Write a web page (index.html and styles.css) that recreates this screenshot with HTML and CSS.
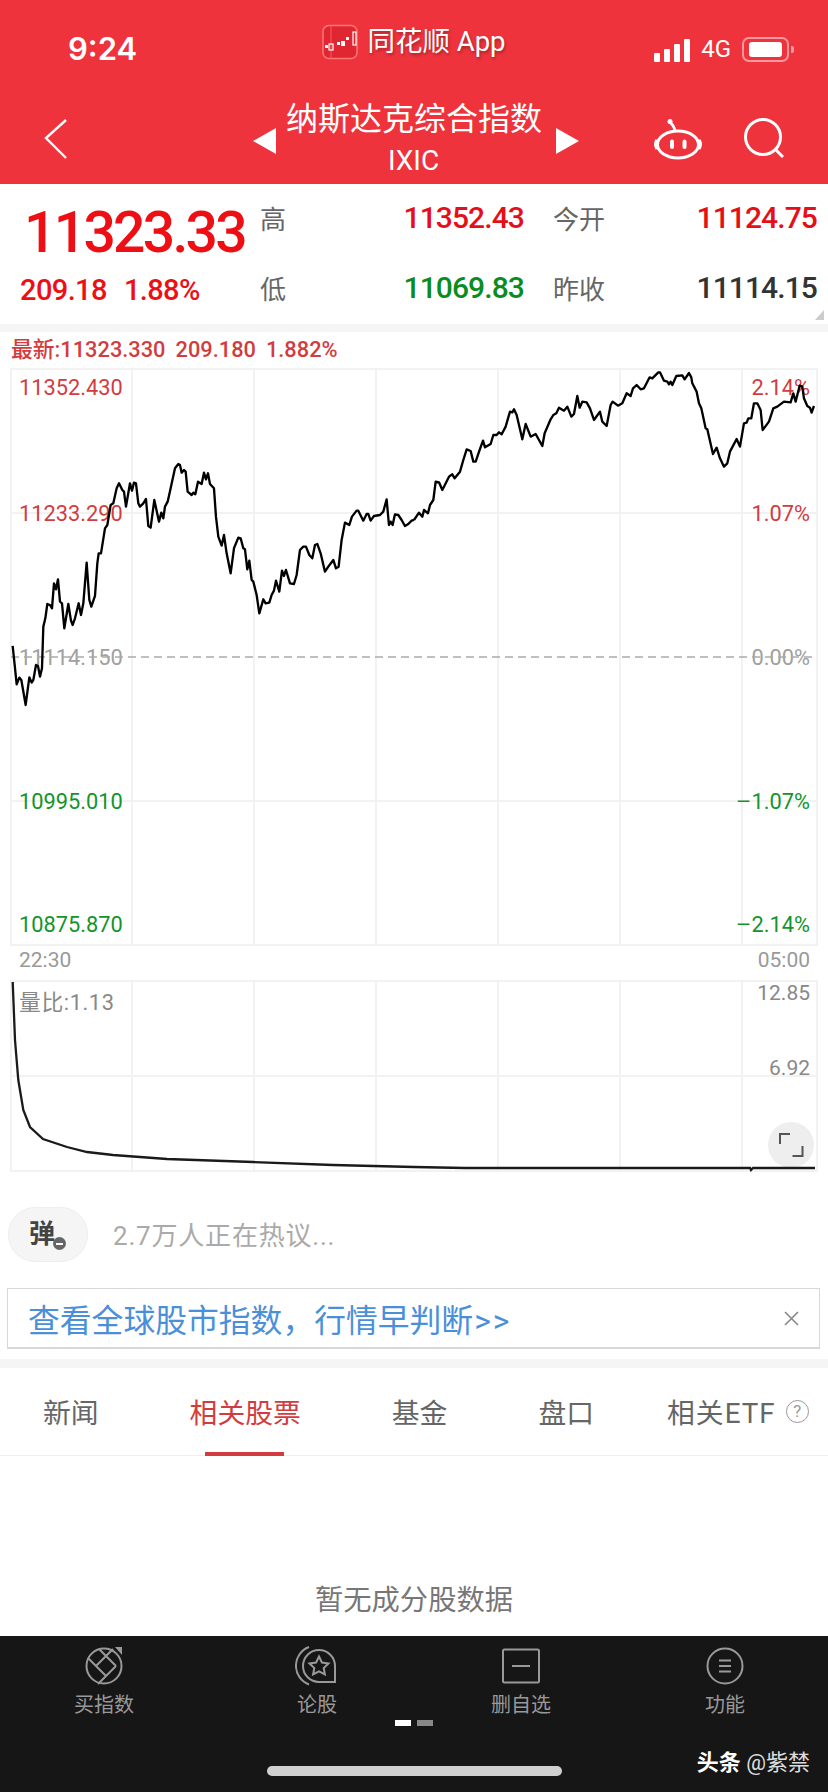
FILE: index.html
```html
<!DOCTYPE html>
<html lang="zh-CN">
<head>
  <meta charset="UTF-8" />
  <meta name="viewport" content="width=device-width, initial-scale=1.0"/>
  <title>纳斯达克综合指数</title>
  <link rel="stylesheet" href="styles.css">
</head>
<body>

<header class="top">
  <div class="status">
    <div class="clock">9:24</div>
    <div class="app-name">
      <svg class="app-logo" width="36" height="36" viewBox="0 0 36 36">
        <rect x="1" y="1.5" width="34" height="33" rx="6" fill="#e02630" stroke="#f77" stroke-width="1.5"/>
        <line x1="9" y1="2" x2="9" y2="34" stroke="#f56" stroke-width="1"/>
        <rect x="3" y="21" width="3" height="3" fill="#fff"/>
        <rect x="7" y="20" width="4" height="6" fill="none" stroke="#fff" stroke-width="1.2"/>
        <rect x="15" y="18" width="3" height="3" fill="#fff"/>
        <rect x="19" y="17" width="4" height="5" fill="#fff"/>
        <rect x="24" y="13" width="3" height="3" fill="#fff"/>
        <rect x="31" y="8" width="3" height="13" fill="none" stroke="#fff" stroke-width="1.2"/>
      </svg>
      <span>同花顺 App</span>
    </div>
    <div class="status-right">
      <div class="signal">
        <i class="s1"></i><i class="s2"></i><i class="s3"></i><i class="s4"></i>
      </div>
      <span class="net">4G</span>
      <div class="battery"><i></i></div>
      <div class="battery-nub"></div>
    </div>
  </div>

  <nav class="nav">
    <svg class="back" width="24" height="40" viewBox="0 0 24 40">
      <polyline points="22,1 2,19 22,39" fill="none" stroke="#fff" stroke-width="2.4"/>
    </svg>
    <div class="title-row">
      <svg width="23" height="26" viewBox="0 0 23 26"><polygon points="23,0 23,26 0,13" fill="#fff"/></svg>
      <div class="title-text">
        <div class="title">纳斯达克综合指数</div>
        <div class="code">IXIC</div>
      </div>
      <svg width="23" height="26" viewBox="0 0 23 26"><polygon points="0,0 0,26 23,13" fill="#fff"/></svg>
    </div>
    <div class="nav-icons">
      <svg width="48" height="42" viewBox="0 0 48 42" fill="none" stroke="#fff" stroke-width="3">
        <ellipse cx="24" cy="26.5" rx="20.5" ry="13.5"/>
        <path d="M21 12 C20 8 18 6 16 4"/>
        <circle cx="16" cy="3.5" r="2.5" fill="#fff" stroke="none"/>
        <line x1="18" y1="23.5" x2="18" y2="29" stroke-width="4" stroke-linecap="round"/>
        <line x1="30.5" y1="23.5" x2="30.5" y2="29" stroke-width="4" stroke-linecap="round"/>
        <path d="M3 22 Q0 26 3 31 M45 22 Q48 26 45 31"/>
      </svg>
      <svg width="40" height="42" viewBox="0 0 40 42" fill="none" stroke="#fff" stroke-width="3">
        <circle cx="19" cy="19" r="17.5"/>
        <line x1="32" y1="32" x2="39" y2="39"/>
      </svg>
    </div>
  </nav>
</header>

<section class="quote">
  <div class="last">
    <div class="last-price">11323.33</div>
    <div class="last-change"><span>209.18</span><span>1.88%</span></div>
  </div>
  <div class="stat"><span class="stat-name">高</span><span class="stat-num up">11352.43</span></div>
  <div class="stat"><span class="stat-name">今开</span><span class="stat-num up">11124.75</span></div>
  <div class="stat"><span class="stat-name">低</span><span class="stat-num down">11069.83</span></div>
  <div class="stat"><span class="stat-name">昨收</span><span class="stat-num">11114.15</span></div>
  <div class="corner"></div>
</section>

<div class="chart-head">最新:11323.330<span>209.180</span><span>1.882%</span></div>

<div class="plot">
  <svg class="plot-grid" width="828" height="582" viewBox="0 366 828 582">
    <g fill="none" stroke="#f2f2f2" stroke-width="2">
      <rect x="11" y="369" width="806" height="576"/>
      <path d="M11 513H817M11 801H817M132 369V945M254 369V945M376 369V945M498 369V945M620 369V945M742 369V945"/>
    </g>
  </svg>
  <div class="lbl up-lbl" style="top:10px">11352.430</div>
  <div class="lbl up-lbl" style="top:136px">11233.290</div>
  <div class="lbl flat-lbl" style="top:280px">11114.150</div>
  <div class="lbl down-lbl" style="top:424px">10995.010</div>
  <div class="lbl down-lbl" style="top:547px">10875.870</div>
  <div class="lbl rt up-lbl" style="top:10px">2.14%</div>
  <div class="lbl rt up-lbl" style="top:136px">1.07%</div>
  <div class="lbl rt flat-lbl" style="top:280px">0.00%</div>
  <div class="lbl rt down-lbl" style="top:424px"><span class="minus">−</span>1.07%</div>
  <div class="lbl rt down-lbl" style="top:547px"><span class="minus">−</span>2.14%</div>
  <svg class="plot-line" width="828" height="582" viewBox="0 366 828 582">
    <line x1="11" y1="657" x2="817" y2="657" stroke="#aaa" stroke-width="1.5" stroke-dasharray="8 5"/>
    <g fill="none" stroke="#000" stroke-width="7" stroke-linejoin="round">
      <polyline transform="translate(0 340) scale(.3333)" points="38,918 44,975 50,1033 58,1013 64,1020 77,1095 88,1012 95,1028 100,1020 108,975 114,978 120,1010 126,985 130,860 136,835 142,792 150,795 156,805 162,730 168,748 174,718 180,785 186,790 193,865 205,792 213,842 218,855 225,835 236,790 243,825 250,790 260,668 268,780 274,800 285,768 292,670 296,640 303,640 315,565 322,555 332,495 340,490 350,445 357,430 367,450 372,455 378,500 390,430 396,452 402,428 408,430 415,490 420,500 430,490 438,477 445,558 452,563 463,480 477,545 484,518 490,535 495,500 503,485 512,445 525,385 535,372 540,375 545,398 552,390 557,395 563,455 575,465 580,458 586,463 594,425 605,432 612,398 618,418 624,400 630,432 642,445 648,530 655,590 665,617 672,585 680,640 692,700 702,625 715,593 722,595 730,625 735,628 742,688 748,662 755,720 760,725 770,765 778,820 790,778 797,790 808,788 815,765 822,752 828,722 838,755 846,692 852,708 858,690 870,730 882,732 890,705 900,630 910,620 918,620 928,645 937,655 945,615 952,612 962,640 975,695 985,680 1000,660 1008,685 1016,680 1025,600 1035,548 1048,555 1056,530 1070,512 1075,512 1090,542 1100,522 1105,522 1112,542 1122,528 1140,525 1150,515 1160,478 1167,555 1172,545 1178,555 1185,523 1195,525 1205,540 1215,558 1225,552 1235,542 1242,540"/>
      <polyline transform="translate(414 340) scale(.3333)" points="0,540 15,518 25,530 30,510 42,520 48,495 58,480 65,425 75,427 85,450 105,410 115,403 122,415 138,395 148,360 158,328 170,333 178,365 185,365 197,330 207,302 213,322 230,312 238,285 248,285 255,277 263,283 275,260 288,215 295,217 300,208 308,225 325,298 335,252 350,290 365,282 385,318 392,280 410,238 418,225 427,220 435,203 450,212 460,200 472,230 480,222 490,168 497,203 505,185 518,187 528,205 540,240 558,215 565,245 578,258 590,195 596,185 612,197 625,190 638,160 650,168 657,145 668,135 680,148 690,145 707,112 715,115 733,97 738,97 750,122 760,125 765,133 770,125 775,135 787,108 805,106 812,118 825,99 832,112 835,130 848,155 855,190 862,205 875,265 880,268 897,342 908,323 918,355 930,380 940,370 948,335 968,297 978,320 990,250 998,248 1003,235 1012,235 1020,190 1030,190 1040,210 1046,270 1065,245 1078,205 1090,200 1110,185 1130,187 1138,160 1145,185 1157,137 1165,140 1170,175 1180,198 1188,203 1193,218 1200,198"/>
    </g>
  </svg>
</div>

<div class="time-row"><span>22:30</span><span>05:00</span></div>

<div class="plot">
  <svg class="plot-grid" width="828" height="196" viewBox="0 978 828 196">
    <g fill="none" stroke="#f2f2f2" stroke-width="2">
      <rect x="11" y="981" width="806" height="190"/>
      <path d="M11 1076H817M132 981V1171M254 981V1171M376 981V1171M498 981V1171M620 981V1171M742 981V1171"/>
    </g>
  </svg>
  <div class="lbl vol-lbl vol-name" style="top:13px">量比:1.13</div>
  <div class="lbl rt vol-lbl vol-num" style="top:3px">12.85</div>
  <div class="lbl rt vol-lbl vol-num" style="top:78px">6.92</div>
  <svg class="plot-line" width="828" height="196" viewBox="0 978 828 196">
    <circle cx="791" cy="1145" r="23" fill="#eee"/>
    <path d="M790 1134H780V1144M792.5 1156H802.5V1146" fill="none" stroke="#555" stroke-width="2"/>
    <polyline points="12.7,982 15,1040 18.3,1080 23.3,1110 30,1127 43,1139 67,1147 87,1152 113,1155 167,1159 253,1162 333,1165 414,1167 465,1168 750,1168 751,1170 753,1168 815,1168" fill="none" stroke="#1a1a1a" stroke-width="2.3"/>
  </svg>
</div>

<div class="danmu">
  <div class="danmu-btn">弹<i class="danmu-off"></i></div>
  <div class="danmu-text">2.7万人正在热议...</div>
</div>

<div class="banner">
  <span>查看全球股市指数，行情早判断<span class="more">&gt;&gt;</span></span>
  <svg width="15" height="15" viewBox="0 0 15 15"><path d="M1 1L14 14M14 1L1 14" stroke="#888" stroke-width="1.6"/></svg>
</div>

<div class="gap"></div>

<div class="tabs">
  <div class="tab">新闻</div>
  <div class="tab active">相关股票</div>
  <div class="tab">基金</div>
  <div class="tab">盘口</div>
  <div class="tab tab-etf"><span class="etf-name">相关ETF</span><span class="help">?</span></div>
</div>

<div class="empty">暂无成分股数据</div>

<footer class="bar">
  <div class="bar-items">
    <div class="bar-item">
      <svg width="44" height="40" viewBox="0 0 44 40" fill="none" stroke="#999" stroke-width="2">
        <circle cx="22" cy="20" r="17.5"/>
        <path d="M14 20L24 10L31 3M34 20L24 10L17 3M24 30L6 12M16 38L24 30L34 20M14 20L24 30"/>
        <polygon points="33,1 40,1 40,9" fill="#999" stroke="none"/>
      </svg>
      <span>买指数</span>
    </div>
    <div class="bar-item">
      <svg width="44" height="40" viewBox="0 0 44 40" fill="none" stroke="#999" stroke-width="2">
        <path d="M24 36A16 16 0 1 1 40 20V36Z"/>
        <path d="M14 1A20 20 0 0 0 14 38.5"/>
        <polygon points="24,10.5 26.9,16.5 33.5,17.4 28.7,22 29.9,28.5 24,25.4 18.1,28.5 19.3,22 14.5,17.4 21.1,16.5"/>
      </svg>
      <span>论股</span>
    </div>
    <div class="bar-item">
      <svg width="44" height="40" viewBox="0 0 44 40" fill="none" stroke="#999" stroke-width="2">
        <rect x="4" y="3.5" width="36" height="33" rx="1.5"/>
        <line x1="13" y1="20" x2="31" y2="20"/>
      </svg>
      <span>删自选</span>
    </div>
    <div class="bar-item">
      <svg width="44" height="40" viewBox="0 0 44 40" fill="none" stroke="#999" stroke-width="2">
        <circle cx="22" cy="20" r="17.5"/>
        <path d="M16 14.5H28M16 20H28M16 25.5H28"/>
      </svg>
      <span>功能</span>
    </div>
  </div>
  <div class="dots"><i class="on"></i><i></i></div>
  <div class="home"></div>
  <div class="mark"><b>头条</b> @紫禁</div>
</footer>

</body>
</html>
```

FILE: styles.css
```css
* {
  box-sizing: border-box;
}

html, body {
  margin: 0;
  padding: 0;
}

body {
  width: 828px;
  height: 1792px;
  overflow: hidden;
  background: #fff;
  font-family: Roboto, "Noto Sans CJK SC", sans-serif;
  color: #333;
}

/* red header */
.top {
  height: 184px;
  background: #ee333c;
  color: #fff;
}

.status {
  height: 76px;
  display: grid;
  grid-template-columns: 1fr auto 1fr;
  align-items: start;
}

.clock {
  margin: 30px 0 0 68px;
  font-family: Inter, Roboto, sans-serif;
  font-size: 31px;
  line-height: 38px;
  font-weight: 600;
}

.app-name {
  margin-top: 23px;
  display: flex;
  align-items: center;
  gap: 9px;
  font-size: 27.5px;
  line-height: 38px;
  text-shadow: 1px 2px 3px rgba(0, 0, 0, 0.3);
}

.app-logo {
  display: block;
}

.status-right {
  margin-top: 37px;
  height: 25px;
  display: flex;
  justify-content: flex-end;
  align-items: center;
  padding-right: 34px;
}

.signal {
  display: flex;
  align-items: flex-end;
  gap: 4px;
  height: 24px;
}

.signal i {
  display: block;
  width: 6px;
  background: #fff;
  border-radius: 1px;
}

.s1 { height: 9px; }
.s2 { height: 13px; }
.s3 { height: 18px; }
.s4 { height: 23px; }

.net {
  margin-left: 11px;
  font-size: 24px;
  line-height: 25px;
}

.battery {
  margin-left: 11px;
  width: 47px;
  height: 25px;
  padding: 3px 5px;
  border: 2px solid rgba(255, 255, 255, 0.5);
  border-radius: 7px;
}

.battery i {
  display: block;
  height: 100%;
  background: #fff;
  border-radius: 3px;
}

.battery-nub {
  margin-left: 2px;
  width: 3px;
  height: 7px;
  background: rgba(255, 255, 255, 0.5);
  border-radius: 0 2px 2px 0;
}

.nav {
  height: 108px;
  padding: 0 44px;
  display: grid;
  grid-template-columns: 1fr auto 1fr;
  align-items: start;
}

.back {
  display: block;
  margin-top: 43px;
}

.title-row {
  margin: 23px 0 0 4px;
  display: flex;
  align-items: center;
}

.title-text {
  width: 255px;
  margin: 0 15px 0 10px;
  text-align: center;
}

.title {
  font-size: 32px;
  line-height: 40px;
  white-space: nowrap;
}

.code {
  font-size: 28px;
  line-height: 44px;
}

.nav-icons {
  margin-top: 42px;
  display: flex;
  justify-content: flex-end;
  gap: 42px;
}

/* quote numbers */
.quote {
  position: relative;
  height: 140px;
  display: grid;
  grid-template-columns: 231px 264px 264px;
  grid-auto-rows: 70px;
  column-gap: 29px;
}

.last {
  grid-row: 1 / 3;
  padding-top: 15px;
  color: #ee0f14;
}

.last-price {
  padding-left: 24px;
  font-size: 57px;
  line-height: 68px;
  font-weight: 500;
  letter-spacing: -2.7px;
  white-space: nowrap;
}

.last-change {
  padding-left: 20px;
  display: flex;
  gap: 17px;
  font-size: 29px;
  font-weight: 500;
  line-height: 46px;
  letter-spacing: -0.6px;
  white-space: nowrap;
}

.stat {
  display: flex;
  justify-content: space-between;
  align-items: center;
  padding-bottom: 3px;
}

.stat-name {
  font-size: 26px;
  color: #666;
}

.stat-num {
  font-size: 30px;
  font-weight: 500;
  letter-spacing: -0.9px;
  color: #333;
}

.stat-num.up { color: #e60f18; }
.stat-num.down { color: #0b8c1f; }

.corner {
  position: absolute;
  right: 4px;
  bottom: 4px;
  width: 0;
  height: 0;
  border-left: 9px solid transparent;
  border-bottom: 10px solid #ccc;
}

/* charts */
.chart-head {
  height: 42px;
  border-top: 8px solid #f5f5f5;
  padding: 1px 0 0 11px;
  font-size: 21.8px;
  font-weight: 500;
  line-height: 34px;
  color: #d23c40;
}

.chart-head span {
  margin-left: 10px;
}

.plot {
  position: relative;
}

.plot-grid {
  display: block;
}

.plot-line {
  position: absolute;
  left: 0;
  top: 0;
}

.lbl {
  position: absolute;
  left: 19px;
  font-size: 21.8px;
  line-height: 24px;
  white-space: nowrap;
}

.lbl.rt {
  left: auto;
  right: 18px;
}

.minus {
  margin-right: 2px;
  display: inline-block;
  transform: scaleX(1.3);
}

.up-lbl { color: #d23c40; }
.down-lbl { color: #12952a; }
.flat-lbl { color: #a0a0a0; }
.vol-lbl { color: #888; }
.vol-name { letter-spacing: 0.6px; }
.lbl.vol-num { font-size: 21px; }

.time-row {
  height: 30px;
  padding: 0 18px 0 19px;
  display: flex;
  justify-content: space-between;
  font-size: 21px;
  line-height: 25px;
  color: #999;
}

/* danmu + banner */
.danmu {
  padding: 33px 0 0 8px;
  display: flex;
  align-items: center;
}

.danmu-btn {
  position: relative;
  width: 80px;
  height: 55px;
  padding-left: 20px;
  background: #f5f5f5;
  border: 1px solid #eee;
  border-radius: 27px;
  font-size: 26px;
  line-height: 52px;
  font-weight: 700;
  color: #444;
}

.danmu-off {
  position: absolute;
  left: 44px;
  top: 29px;
  width: 13px;
  height: 13px;
  background: #666;
  border-radius: 50%;
}

.danmu-off::after {
  content: "";
  position: absolute;
  left: 3px;
  top: 6px;
  width: 7px;
  height: 1.5px;
  background: #fff;
}

.danmu-text {
  margin: -2px 0 0 25px;
  font-size: 26px;
  letter-spacing: 0.8px;
  color: #aaa;
}

.banner {
  height: 61px;
  margin: 26px 8px 0 7px;
  padding: 0 20px;
  display: flex;
  justify-content: space-between;
  align-items: center;
  border: 1px solid #d8d8d8;
  border-bottom-width: 2px;
  font-size: 31.8px;
  color: #4a90d9;
}

.more {
  margin-left: 1px;
  letter-spacing: 2px;
}

.gap {
  height: 9px;
  margin-top: 10px;
  background: #f5f5f5;
}

/* tabs */
.tabs {
  height: 88px;
  padding: 0 0 2px 43px;
  display: flex;
  align-items: center;
  gap: 91px;
  border-bottom: 1px solid #eee;
  font-size: 27.8px;
  color: #666;
}

.tab {
  position: relative;
  white-space: nowrap;
}

.tab.active {
  color: #d23c40;
}

.tab.active::after {
  content: "";
  position: absolute;
  left: 15px;
  right: 17px;
  bottom: -25px;
  height: 4px;
  background: #d23c40;
}

.tab-etf {
  margin-left: -18px;
  display: flex;
  align-items: center;
  gap: 10px;
}

.etf-name {
  letter-spacing: 1px;
}

.help {
  width: 23px;
  height: 23px;
  margin-top: 2px;
  border: 1.5px solid #999;
  border-radius: 50%;
  font-size: 17px;
  line-height: 20px;
  text-align: center;
  color: #999;
}

.empty {
  height: 180px;
  padding-top: 126px;
  text-align: center;
  font-size: 28.3px;
  line-height: 38px;
  color: #777;
}

/* bottom bar */
.bar {
  position: relative;
  height: 156px;
  padding-top: 10px;
  background: #161616;
}

.bar-items {
  display: grid;
  grid-template-columns: 208px 218px 190px 218px;
}

.bar-item {
  display: flex;
  flex-direction: column;
  align-items: center;
  gap: 7px;
  font-size: 20px;
  line-height: 24px;
  color: #999;
}

.bar-item svg {
  display: block;
}

.dots {
  margin-top: 3px;
  display: flex;
  justify-content: center;
  gap: 6px;
}

.dots i {
  display: block;
  width: 16px;
  height: 6px;
  background: #888;
}

.dots i.on {
  background: #fff;
}

.home {
  width: 295px;
  height: 10px;
  margin: 40px auto 0;
  background: #d0d0d0;
  border-radius: 5px;
}

.mark {
  position: absolute;
  right: 18px;
  top: 112px;
  font-size: 22px;
  line-height: 30px;
  color: #ddd;
  white-space: nowrap;
}

.mark b {
  color: #fff;
}
```
